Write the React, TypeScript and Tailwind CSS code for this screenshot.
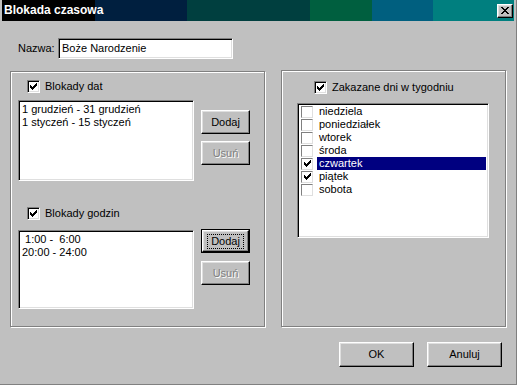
import React from "react";

const sunken =
  "border border-t-[#808080] border-l-[#808080] border-r-white border-b-white shadow-[inset_1px_1px_0_#000,inset_-1px_-1px_0_#dfdfdf]";
const raised =
  "border border-t-white border-l-white border-r-black border-b-black shadow-[inset_-1px_-1px_0_#808080,inset_1px_1px_0_#dfdfdf]";
const etched =
  "border border-[#808080] shadow-[1px_1px_0_#fff,inset_1px_1px_0_#fff]";

const CheckMark = ({ color = "#000" }: { color?: string }) => {
  const cols = [2, 3, 4, 3, 2, 1, 0];
  return (
    <svg width="7" height="7" viewBox="0 0 7 7" shapeRendering="crispEdges">
      {cols.map((y, x) => (
        <rect key={x} x={x} y={y} width="1" height="3" fill={color} />
      ))}
    </svg>
  );
};

const CloseGlyph = () => {
  const rows = [
    [0, 1, 6, 7],
    [1, 2, 5, 6],
    [2, 3, 4, 5],
    [3, 4],
    [2, 3, 4, 5],
    [1, 2, 5, 6],
    [0, 1, 6, 7],
  ];
  return (
    <svg width="8" height="7" viewBox="0 0 8 7" shapeRendering="crispEdges">
      {rows.map((r, y) =>
        r.map((x) => <rect key={`${x}-${y}`} x={x} y={y} width="1" height="1" fill="#000" />)
      )}
    </svg>
  );
};

const Check = ({ checked }: { checked?: boolean }) => (
  <span className={`flex h-[13px] w-[13px] shrink-0 items-center justify-center bg-white ${sunken}`}>
    {checked && <CheckMark />}
  </span>
);

const Btn = ({
  label,
  disabled,
  className = "",
}: {
  label: string;
  disabled?: boolean;
  className?: string;
}) => (
  <button
    className={`flex items-center justify-center bg-[#c0c0c0] ${raised} ${className} ${
      disabled ? "text-[#808080] [text-shadow:1px_1px_0_#fff]" : "text-black"
    }`}
  >
    {label}
  </button>
);

const DefaultBtn = ({ label }: { label: string }) => (
  <div className="flex h-[24px] w-[49px] border border-black">
    <button className={`flex flex-1 items-center justify-center bg-[#c0c0c0] ${raised}`}>
      <span className="border border-dotted border-black px-[3px] leading-[13px]">{label}</span>
    </button>
  </div>
);

const ListBox = ({ items, className }: { items: string[]; className: string }) => (
  <div className={`bg-white ${sunken} ${className} pl-[3px] pt-[2px]`}>
    {items.map((t) => (
      <div key={t} className="h-[13px] whitespace-pre leading-[13px]">
        {t}
      </div>
    ))}
  </div>
);

const days = [
  { name: "niedziela", on: false },
  { name: "poniedziałek", on: false },
  { name: "wtorek", on: false },
  { name: "środa", on: false },
  { name: "czwartek", on: true, sel: true },
  { name: "piątek", on: true },
  { name: "sobota", on: false },
];

export default function App() {
  return (
    <div className="flex h-[385px] w-[517px] flex-col border-b border-r border-[#808080] bg-[#c0c0c0] pl-[2px] pr-[2px] font-['Liberation_Sans',Arial,sans-serif] text-[11px] leading-[13px] text-black">
      {/* title bar */}
      <div className="flex h-[21px] w-[512px] shrink-0 items-center justify-between bg-[linear-gradient(to_right,#000_93px,#001f3f_93px,#001f3f_185px,#003f3f_185px,#003f3f_308px,#005f3f_308px,#005f3f_370px,#005f7f_370px,#005f7f_431px,#007f7f_431px)]">
        <span className="pl-[2px] text-[12px] font-bold text-white">Blokada czasowa</span>
        <button className={`mr-[1px] flex h-[14px] w-[16px] items-center justify-center bg-[#c0c0c0] ${raised}`}>
          <CloseGlyph />
        </button>
      </div>

      {/* name */}
      <div className="mt-[17px] flex items-center pl-[16px]">
        <span className="w-[40px]">Nazwa:</span>
        <div className={`flex h-[21px] w-[175px] items-center bg-white pl-[3px] ${sunken}`}>
          Boże Narodzenie
        </div>
      </div>

      {/* groups */}
      <div className="mt-[11px] flex items-start gap-[16px] pl-[8px]">
        <div className={`mt-[1px] flex h-[256px] w-[255px] flex-col pl-[7px] pt-[8px] ${etched}`}>
          <label className="ml-[9px] flex h-[13px] items-center gap-[5px]">
            <Check checked />
            <span>Blokady dat</span>
          </label>
          <div className="mt-[7px] flex items-start">
            <ListBox
              className="h-[81px] w-[176px]"
              items={["1 grudzień - 31 grudzień", "1 styczeń - 15 styczeń"]}
            />
            <div className="ml-[7px] mt-[10px] flex flex-col gap-[7px]">
              <Btn label="Dodaj" className="h-[24px] w-[49px]" />
              <Btn label="Usuń" disabled className="h-[24px] w-[49px]" />
            </div>
          </div>

          <label className="ml-[9px] mt-[26px] flex h-[13px] items-center gap-[5px]">
            <Check checked />
            <span>Blokady godzin</span>
          </label>
          <div className="mt-[10px] flex items-start">
            <ListBox className="h-[79px] w-[176px]" items={[" 1:00 -  6:00", "20:00 - 24:00"]} />
            <div className="ml-[7px] mt-[-1px] flex flex-col gap-[8px]">
              <DefaultBtn label="Dodaj" />
              <Btn label="Usuń" disabled className="h-[24px] w-[49px]" />
            </div>
          </div>
        </div>

        <div className={`flex h-[257px] w-[225px] flex-col pl-[15px] pt-[10px] ${etched}`}>
          <label className="ml-[17px] flex h-[13px] items-center gap-[5px]">
            <Check checked />
            <span>Zakazane dni w tygodniu</span>
          </label>
          <div className={`mt-[9px] h-[135px] w-[192px] bg-white pl-[3px] pr-[2px] pt-[1px] ${sunken}`}>
            {days.map((d) => (
              <div key={d.name} className="flex h-[13px] items-center">
                <span className="flex h-[12px] w-[12px] shrink-0 items-center justify-center border border-[#808080] border-b-[#dfdfdf] border-r-[#dfdfdf] bg-white">
                  {d.on && <CheckMark />}
                </span>
                <span
                  className={`ml-[4px] flex h-[13px] flex-1 items-center pl-[2px] ${
                    d.sel ? "bg-[#000080] text-white" : ""
                  }`}
                >
                  {d.name}
                </span>
              </div>
            ))}
          </div>
        </div>
      </div>

      {/* dialog buttons */}
      <div className="mt-[15px] flex justify-end gap-[13px] pr-[12px]">
        <Btn label="OK" className="h-[25px] w-[75px]" />
        <Btn label="Anuluj" className="h-[25px] w-[75px]" />
      </div>
    </div>
  );
}
